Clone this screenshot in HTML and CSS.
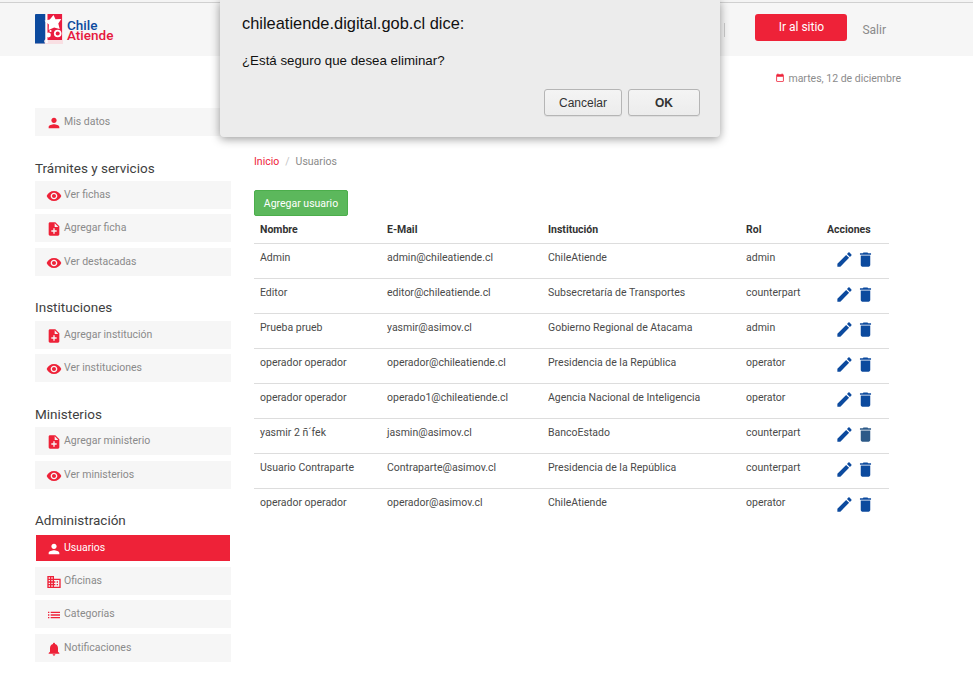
FILE: index.html
```html
<!DOCTYPE html>
<html lang="es">
<head>
<meta charset="utf-8">
<title>Usuarios</title>
<link rel="stylesheet" href="styles.css">
</head>
<body>
<svg class="defs" width="0" height="0">
  <symbol id="i-person" viewBox="0 0 24 24"><path d="M12 12c2.21 0 4-1.79 4-4s-1.79-4-4-4-4 1.79-4 4 1.79 4 4 4zm0 2c-2.67 0-8 1.34-8 4v2h16v-2c0-2.66-5.33-4-8-4z"/></symbol>
  <symbol id="i-eye" viewBox="0 0 24 24"><path d="M12 4.5C7 4.5 2.73 7.61 1 12c1.73 4.39 6 7.5 11 7.5s9.27-3.11 11-7.5c-1.73-4.39-6-7.5-11-7.5zM12 17c-2.76 0-5-2.24-5-5s2.24-5 5-5 5 2.24 5 5-2.24 5-5 5zm0-8c-1.66 0-3 1.34-3 3s1.34 3 3 3 3-1.34 3-3-1.34-3-3-3z"/></symbol>
  <symbol id="i-note" viewBox="0 0 24 24"><path d="M14 2H6c-1.1 0-1.99.9-1.99 2L4 20c0 1.1.89 2 1.99 2H18c1.1 0 2-.9 2-2V8l-6-6zm2 14h-3v3h-2v-3H8v-2h3v-3h2v3h3v2zm-3-7V3.5L18.5 9H13z"/></symbol>
  <symbol id="i-domain" viewBox="0 0 24 24"><path d="M12 7V3H2v18h20V7H12zM6 19H4v-2h2v2zm0-4H4v-2h2v2zm0-4H4V9h2v2zm0-4H4V5h2v2zm4 12H8v-2h2v2zm0-4H8v-2h2v2zm0-4H8V9h2v2zm0-4H8V5h2v2zm10 12h-8v-2h2v-2h-2v-2h2v-2h-2V9h8v10zm-2-8h-2v2h2v-2zm0 4h-2v2h2v-2z"/></symbol>
  <symbol id="i-list" viewBox="0 0 24 24"><path d="M3 13h2v-2H3v2zm0 4h2v-2H3v2zm0-8h2V7H3v2zm4 4h14v-2H7v2zm0 4h14v-2H7v2zM7 7v2h14V7H7z"/></symbol>
  <symbol id="i-bell" viewBox="0 0 24 24"><path d="M12 22c1.1 0 2-.9 2-2h-4c0 1.1.89 2 2 2zm6-6v-5c0-3.07-1.64-5.64-4.5-6.32V4c0-.83-.67-1.5-1.5-1.5s-1.5.67-1.5 1.5v.68C7.63 5.36 6 7.92 6 11v5l-2 2v1h16v-1l-2-2z"/></symbol>
  <symbol id="i-edit" viewBox="0 0 24 24"><path d="M3 17.25V21h3.75L17.81 9.94l-3.75-3.75L3 17.25zM20.71 7.04c.39-.39.39-1.02 0-1.41l-2.34-2.34c-.39-.39-1.02-.39-1.41 0l-1.83 1.83 3.75 3.75 1.83-1.83z"/></symbol>
  <symbol id="i-trash" viewBox="0 0 24 24"><path d="M6 19c0 1.1.9 2 2 2h8c1.1 0 2-.9 2-2V7H6v12zM19 4h-3.5l-1-1h-5l-1 1H5v2h14V4z"/></symbol>
  <symbol id="i-event" viewBox="0 0 24 24"><path d="M16 1v2H8V1H6v2H5c-1.11 0-1.99.9-1.99 2L3 19c0 1.1.89 2 2 2h14c1.1 0 2-.9 2-2V5c0-1.1-.9-2-2-2h-1V1h-2zm3 18H5V9h14v10z"/></symbol>
</svg>

<header class="topbar">
  <a class="logo">
    <svg class="logo-mark" viewBox="0 0 28 30" width="28" height="30">
      <rect x="0" y="0" width="28" height="30" fill="#f9dfe3"/>
      <path d="M0 1Q0 0 1 0H10.5V25L9 27 10 29.5H0Z" fill="#0c4a9e"/>
      <rect x="10.5" y="0" width="2.2" height="29" fill="#fff"/>
      <path d="M12.5 0H27V26H12.5Z" fill="#ea1c3f"/>
      <path d="M18.5 1l2 4.2 5.8-.2-3 4.6 1.4 5.4-5.6-1.6-5.4 2.6.2-5.6L9.4 6.8l5.4-1.2z" fill="#fff"/>
      <circle cx="22.7" cy="19.5" r="3.8" fill="#fff"/>
      <circle cx="22.7" cy="19.5" r="2" fill="#ea1c3f"/>
      <circle cx="13.5" cy="21" r="2.4" fill="#fff"/>
      <circle cx="15.5" cy="17" r="1.1" fill="#fff"/>
    </svg>
    <span class="logo-text"><span class="logo-chile">Chile</span><span class="logo-atiende">Atiende</span></span>
  </a>
  <div class="top-actions">
    <span class="top-sep"></span>
    <a class="btn-site">Ir al sitio</a>
    <a class="link-exit">Salir</a>
  </div>
</header>

<div class="date-row">
  <svg class="ico-date"><use href="#i-event"/></svg>
  <span>martes, 12 de diciembre</span>
</div>

<div class="layout">
  <nav class="sidebar">
    <ul class="menu menu-first">
      <li class="item"><svg class="ico"><use href="#i-person"/></svg>Mis datos</li>
    </ul>
    <h3 class="menu-title">Trámites y servicios</h3>
    <ul class="menu">
      <li class="item"><svg class="ico"><use href="#i-eye"/></svg>Ver fichas</li>
      <li class="item"><svg class="ico"><use href="#i-note"/></svg>Agregar ficha</li>
      <li class="item"><svg class="ico"><use href="#i-eye"/></svg>Ver destacadas</li>
    </ul>
    <h3 class="menu-title">Instituciones</h3>
    <ul class="menu">
      <li class="item"><svg class="ico"><use href="#i-note"/></svg>Agregar institución</li>
      <li class="item"><svg class="ico"><use href="#i-eye"/></svg>Ver instituciones</li>
    </ul>
    <h3 class="menu-title">Ministerios</h3>
    <ul class="menu">
      <li class="item"><svg class="ico"><use href="#i-note"/></svg>Agregar ministerio</li>
      <li class="item"><svg class="ico"><use href="#i-eye"/></svg>Ver ministerios</li>
    </ul>
    <h3 class="menu-title">Administración</h3>
    <ul class="menu">
      <li class="item active"><svg class="ico"><use href="#i-person"/></svg>Usuarios</li>
      <li class="item"><svg class="ico"><use href="#i-domain"/></svg>Oficinas</li>
      <li class="item"><svg class="ico"><use href="#i-list"/></svg>Categorías</li>
      <li class="item"><svg class="ico"><use href="#i-bell"/></svg>Notificaciones</li>
    </ul>
  </nav>

  <main class="content">
    <div class="crumbs"><a class="crumb-link">Inicio</a><span class="crumb-sep">/</span><span>Usuarios</span></div>
    <a class="btn-add">Agregar usuario</a>
    <table class="users">
      <colgroup><col class="c1"><col class="c2"><col class="c3"><col class="c4"><col class="c5"></colgroup>
      <thead>
        <tr><th>Nombre</th><th>E-Mail</th><th>Institución</th><th>Rol</th><th>Acciones</th></tr>
      </thead>
      <tbody>
        <tr><td>Admin</td><td>admin@chileatiende.cl</td><td>ChileAtiende</td><td>admin</td><td class="acts"><svg class="act"><use href="#i-edit"/></svg><svg class="act"><use href="#i-trash"/></svg></td></tr>
        <tr><td>Editor</td><td>editor@chileatiende.cl</td><td>Subsecretaría de Transportes</td><td>counterpart</td><td class="acts"><svg class="act"><use href="#i-edit"/></svg><svg class="act"><use href="#i-trash"/></svg></td></tr>
        <tr><td>Prueba prueb</td><td>yasmir@asimov.cl</td><td>Gobierno Regional de Atacama</td><td>admin</td><td class="acts"><svg class="act"><use href="#i-edit"/></svg><svg class="act"><use href="#i-trash"/></svg></td></tr>
        <tr><td>operador operador</td><td>operador@chileatiende.cl</td><td>Presidencia de la República</td><td>operator</td><td class="acts"><svg class="act"><use href="#i-edit"/></svg><svg class="act"><use href="#i-trash"/></svg></td></tr>
        <tr><td>operador operador</td><td>operado1@chileatiende.cl</td><td>Agencia Nacional de Inteligencia</td><td>operator</td><td class="acts"><svg class="act"><use href="#i-edit"/></svg><svg class="act"><use href="#i-trash"/></svg></td></tr>
        <tr><td>yasmir 2 ñ´fek</td><td>jasmin@asimov.cl</td><td>BancoEstado</td><td>counterpart</td><td class="acts"><svg class="act"><use href="#i-edit"/></svg><svg class="act act-hover"><use href="#i-trash"/></svg></td></tr>
        <tr><td>Usuario Contraparte</td><td>Contraparte@asimov.cl</td><td>Presidencia de la República</td><td>counterpart</td><td class="acts"><svg class="act"><use href="#i-edit"/></svg><svg class="act"><use href="#i-trash"/></svg></td></tr>
        <tr><td>operador operador</td><td>operador@asimov.cl</td><td>ChileAtiende</td><td>operator</td><td class="acts"><svg class="act"><use href="#i-edit"/></svg><svg class="act"><use href="#i-trash"/></svg></td></tr>
      </tbody>
    </table>
  </main>
</div>

<div class="dialog" role="dialog">
  <div class="dialog-title">chileatiende.digital.gob.cl dice:</div>
  <div class="dialog-msg">¿Está seguro que desea eliminar?</div>
  <div class="dialog-btns">
    <button class="dlg-btn">Cancelar</button>
    <button class="dlg-btn dlg-ok">OK</button>
  </div>
</div>
</body>
</html>
```
FILE: styles.css
```css
* { box-sizing: border-box; }
html, body { margin: 0; padding: 0; height: 674px; overflow: hidden; }
body { background: #fff; font-family: Roboto, "Liberation Sans", sans-serif; color: #4a4a4a; position: relative; }
.defs { position: absolute; }
ul { list-style: none; margin: 0; padding: 0; }

.topbar { height: 54px; margin-top: 2px; background: #f6f6f6; border-top: 1px solid #d0d0d0; box-shadow: 0 -2px 0 #f4f4f4; display: flex; align-items: center; justify-content: space-between; padding: 0 87px 0 35px; }
.logo { display: flex; align-items: center; margin-bottom: 1px; }
.logo-mark { display: block; }
.logo-text { display: flex; flex-direction: column; margin-left: 4px; font-size: 13.5px; line-height: 10.5px; font-weight: 500; padding-top: 2px; }
.logo-chile { color: #0c4a9e; }
.logo-atiende { color: #e6183c; }
.top-actions { display: flex; align-items: center; }
.top-sep { width: 1px; height: 14px; background: #ccc; margin-right: 30px; }
.btn-site { width: 92px; height: 27px; margin-bottom: 4px; padding-bottom: 1px; border-radius: 3px; background: #ee2238; color: #fff; font-size: 12px; display: flex; align-items: center; justify-content: center; }
.link-exit { margin-left: 15px; font-size: 12px; color: #8a8a8a; }

.date-row { display: flex; align-items: center; justify-content: flex-end; height: 14px; margin-top: 15px; padding-right: 72px; font-size: 10.5px; color: #8c8c8c; }
.ico-date { width: 10px; height: 10px; margin-right: 3px; fill: #ee2238; }

.layout { display: flex; margin-top: 23px; }
.sidebar { width: 196px; margin-left: 35px; flex: none; }
.menu-title { margin: 0; height: 39.6px; padding-top: 16.2px; font-size: 13.5px; line-height: 20px; font-weight: 400; color: #3f3f3f; }
.menu { display: flex; flex-direction: column; }
.menu .item { margin-bottom: 5.4px; }
.item { height: 28px; background: #f6f6f6; display: flex; align-items: center; padding: 0 0 1px 11px; font-size: 10.5px; color: #8a8a8a; }
.ico { width: 16px; height: 16px; margin-right: 2px; fill: #ee2238; position: relative; top: 1.5px; }
.item.active { background: #ee2238; color: #fff; border: 1px solid #fff; padding-left: 10px; }
.active .ico { fill: #fff; }

.content { margin-left: 23px; width: 635px; padding-top: 47px; }
.crumbs { height: 14px; font-size: 10.5px; line-height: 14px; color: #8a8a8a; display: flex; }
.crumb-link { color: #ee2238; }
.crumb-sep { margin: 0 6px; color: #c4c4c4; }
.btn-add { display: flex; align-items: center; justify-content: center; width: 94px; height: 26px; margin-top: 21px; background: #5cb85c; border: 1px solid #4cae4c; border-radius: 2px; color: #fff; font-size: 10.5px; }

.users { width: 635px; border-collapse: collapse; table-layout: fixed; font-size: 10.5px; color: #4a4a4a; }
.c1 { width: 127px; } .c2 { width: 161px; } .c3 { width: 198px; } .c4 { width: 81px; } .c5 { width: 68px; }
.users th { text-align: left; font-weight: 700; height: 27px; padding: 0 6px; color: #333; border-bottom: 1px solid #ddd; white-space: nowrap; }
.users td { height: 35px; padding: 0 6px 6px; border-bottom: 1px solid #ddd; vertical-align: middle; white-space: nowrap; }
.users tbody tr:last-child td { border-bottom: 0; }
.users td.acts { padding: 0 0 2px 14px; line-height: 0; }
.act { width: 19px; height: 19px; fill: #0c4a9e; margin-right: 2px; vertical-align: top; }
.act-hover { fill: #2d5a88; }

.dialog { position: absolute; left: 220px; top: 0; width: 500px; height: 137px; background: #ececec; border-radius: 0 0 4px 4px; box-shadow: 0 2px 10px rgba(0,0,0,.4); color: #111; }
.dialog-title { position: absolute; left: 22px; top: 13px; font-family: "Liberation Sans", Arial, sans-serif; font-size: 16.4px; line-height: 20px; }
.dialog-msg { position: absolute; left: 22px; top: 53px; font-family: "Liberation Sans", Arial, sans-serif; font-size: 13.3px; line-height: 16px; }
.dialog-btns { position: absolute; right: 20px; top: 89px; display: flex; gap: 6px; }
.dlg-btn { width: 78px; height: 27px; padding: 0; background: linear-gradient(#f4f4f4, #ececec); border: 1px solid #b5b5b5; border-radius: 3px; font-family: "Liberation Sans", Arial, sans-serif; font-size: 12px; color: #333; box-shadow: 0 1px 0 rgba(0,0,0,.06); }
.dlg-ok { width: 72px; font-weight: 700; }
```
